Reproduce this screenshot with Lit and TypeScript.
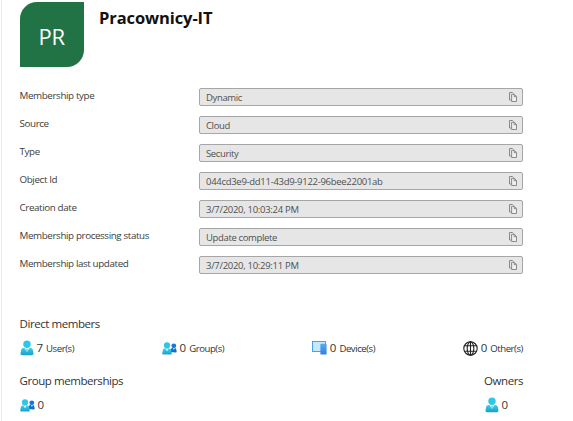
import { LitElement, html, css } from "lit";
import { customElement } from "lit/decorators.js";

const person = html`<svg class="icon" width="14" height="16" viewBox="0 0 14 16">
  <defs>
    <linearGradient id="p" x1="0" y1="0" x2="0" y2="1"><stop offset="0" stop-color="#35d0ee" /><stop offset="1" stop-color="#1b9fc9" /></linearGradient>
  </defs>
  <path d="M2 15.2Q.5 15.2.5 13.6L1.2 9.8Q1.6 8 3.6 8h6.8q2 0 2.4 1.8l.7 3.8q0 1.6-1.5 1.6z" fill="url(#p)" />
  <path d="M4.4 8h5.2L7 12z" fill="#e8fbff" />
  <path d="M7 8.8l.7.8L7 11.8l-.7-2.2z" fill="#2db9dc" />
  <circle cx="7" cy="4.3" r="3.7" fill="#2fc6e8" />
</svg>`;

const group = html`<svg class="icon" width="15" height="13" viewBox="0 0 15 13">
  <defs>
    <linearGradient id="g" x1="0" y1="0" x2="0" y2="1"><stop offset="0" stop-color="#35d0ee" /><stop offset="1" stop-color="#1b9fc9" /></linearGradient>
  </defs>
  <path d="M8.4 10L9 7.2q.3-1.2 1.4-1.2h2.4q1.1 0 1.3 1.1l.6 2.4q.1 1-.9 1z" fill="#0f6fd0" />
  <path d="M10.8 6h2.2l-1.1 2z" fill="#d9efff" />
  <circle cx="11.8" cy="3.8" r="2.4" fill="#1478d8" />
  <path d="M1.2 12.6Q.1 12.5.2 11.4l.7-3.5Q1.2 6.5 2.6 6.5h4.8q1.4 0 1.7 1.4l.7 3.5q.1 1.1-1 1.2z" fill="url(#g)" />
  <path d="M3.2 6.5h3.6L5 9.2z" fill="#e8fbff" />
  <circle cx="5" cy="3.4" r="3.1" fill="#2fc6e8" />
</svg>`;

const device = html`<svg class="icon" width="15" height="14" viewBox="0 0 15 14">
  <defs>
    <linearGradient id="d" x1="0" y1="0" x2="0" y2="1"><stop offset="0" stop-color="#5aa8f4" /><stop offset="1" stop-color="#2f80e2" /></linearGradient>
  </defs>
  <rect x=".5" y=".5" width="13" height="10" fill="#c3e9fa" stroke="#4c9fee" />
  <rect x="8.4" y="2.8" width="6.2" height="10.8" rx=".6" fill="url(#d)" />
</svg>`;

const globe = html`<svg class="icon" width="15" height="15" viewBox="0 0 15 15" fill="none" stroke="#222" stroke-width="1.1">
  <circle cx="7.5" cy="7.5" r="6.7" />
  <ellipse cx="7.5" cy="7.5" rx="3.3" ry="6.7" />
  <path d="M1.4 4.7h12.2M1.4 10.3h12.2M7.5.8v13.4" />
</svg>`;

const copy = html`<svg class="copy" width="8" height="10" viewBox="0 0 8 10" fill="none" stroke="#808080" stroke-width=".9">
  <path d="M2.3 8H.5V.5h3l1 1" />
  <path d="M2.6 2.3h2.8l2.1 2.2v5H2.6z" fill="#efefef" />
  <path d="M5.2 2.4v2.3h2.2" />
</svg>`;

const rows: [string, string, string][] = [
  ["Membership type", "Dynamic", ""],
  ["Source", "Cloud", ""],
  ["Type", "Security", ""],
  ["Object Id", "044cd3e9-dd11-43d9-9122-96bee22001ab", "numeric"],
  ["Creation date", "3/7/2020, 10:03:24 PM", "numeric"],
  ["Membership processing status", "Update complete", ""],
  ["Membership last updated", "3/7/2020, 10:29:11 PM", "numeric"],
];

@customElement("app-root")
export class AppRoot extends LitElement {
  static styles = css`
    :host {
      display: block;
      box-sizing: border-box;
      height: 421px;
      overflow: hidden;
      background: #fff;
      color: #333;
      font-family: "Open Sans", "Noto Sans", sans-serif;
      white-space: nowrap;
    }
    .pane {
      box-sizing: border-box;
      height: 421px;
      margin-left: 1px;
      border-left: 1px solid #e9e9e9;
      padding: 2px 50px 0 17.5px;
    }
    .head { display: flex; height: 86px; }
    .avatar {
      width: 64.5px;
      height: 65px;
      border-radius: 17px 0 17px 0;
      background: #217346;
      color: #fff;
      font-size: 22px;
      letter-spacing: -0.2px;
      line-height: 68px;
      text-align: center;
    }
    .title { margin: 4px 0 0 15px; font-size: 16.5px; font-weight: 700; line-height: 24px; color: #111; letter-spacing: -0.1px; }
    .row { display: flex; height: 28px; }
    .label { width: 179.5px; font-size: 9.8px; line-height: 15px; color: #3c3c3c; letter-spacing: -0.38px; }
    .field {
      box-sizing: border-box;
      flex: 1;
      display: flex;
      align-items: center;
      justify-content: space-between;
      height: 18px;
      padding: 1px 5px 0 6px;
      border: 1px solid #a6a6a6;
      border-radius: 2px;
      background: #e6e6e6;
      font-size: 9.5px;
      line-height: 14px;
      color: #505050;
      letter-spacing: -0.36px;
    }
    .numeric { letter-spacing: -0.29px; }
    .copy { display: block; margin-top: -1px; }
    .sub { display: flex; justify-content: space-between; font-size: 11.5px; line-height: 18px; letter-spacing: -0.43px; }
    .direct { margin-top: 31px; }
    .counts { display: flex; justify-content: space-between; height: 18px; margin-top: 6px; }
    .count { display: flex; align-items: center; font-size: 11.5px; line-height: 18px; }
    .icon { display: block; margin-right: 3px; }
    .unit { margin-left: 3px; padding-top: 1px; font-size: 9.6px; letter-spacing: -0.45px; }
    .groups { margin-top: 15px; }
    .owner { width: 38.5px; }
  `;

  render() {
    const count = (icon: unknown, n: number, unit: string) =>
      html`<div class="count">${icon}<span>${n}</span><span class="unit">${unit}</span></div>`;
    return html`<div class="pane">
      <div class="head">
        <div class="avatar">PR</div>
        <div class="title">Pracownicy-IT</div>
      </div>
      ${rows.map(
        ([label, value, kind]) => html`<div class="row">
          <div class="label">${label}</div>
          <div class="field"><span class=${kind}>${value}</span>${copy}</div>
        </div>`
      )}
      <div class="sub direct"><span>Direct members</span></div>
      <div class="counts">
        ${count(person, 7, "User(s)")} ${count(group, 0, "Group(s)")}
        ${count(device, 0, "Device(s)")} ${count(globe, 0, "Other(s)")}
      </div>
      <div class="sub groups"><span>Group memberships</span><span>Owners</span></div>
      <div class="counts">
        <div class="count">${group}<span>0</span></div>
        <div class="count owner">${person}<span>0</span></div>
      </div>
    </div>`;
  }
}
